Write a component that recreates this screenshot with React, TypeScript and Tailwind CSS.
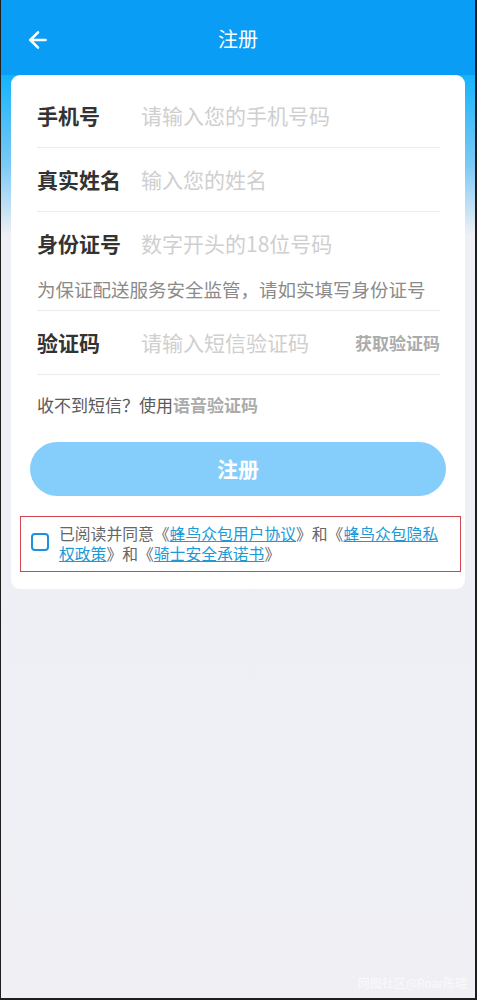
import { ArrowLeft } from 'lucide-react'

const font = "font-['Noto_Sans_CJK_SC','Noto_Sans',sans-serif]"

interface FieldRowProps {
  label: string
  placeholder: string
  action?: string
  bordered?: boolean
}

function FieldRow({ label, placeholder, action, bordered = true }: FieldRowProps) {
  return (
    <div className={`flex items-center h-[64px] ${bordered ? 'border-b border-[#ececec]' : ''}`}>
      <span className="w-[104px] shrink-0 text-[21px] font-bold text-[#333]">{label}</span>
      <span className="flex-1 text-[21px] text-[#cfcfcf]">{placeholder}</span>
      {action && <span className="text-[17px] font-bold text-[#ababab]">{action}</span>}
    </div>
  )
}

export default function App() {
  return (
    <div className={`${font} w-[477px] h-[1000px] flex flex-col bg-[#efeff4] border-l border-r-2 border-b-2 border-[#1e1e1e] relative`}>
      {/* header */}
      <header className="h-[75px] shrink-0 bg-[#0a9df6] flex items-center relative">
        <ArrowLeft className="absolute left-[24px] top-[27px] w-[26px] h-[26px] text-white" strokeWidth={2.4} />
        <h1 className="w-full text-center text-white text-[20px] leading-none pt-[3px]">注册</h1>
      </header>

      <div className="flex-1 bg-[linear-gradient(to_bottom,#14b3fb_0px,#7ccaf5_90px,#eef0f5_160px,#efeff4_100%)] pl-[10px] pr-[10px]">
        <div className="bg-white rounded-[9px] pt-[9px] pb-[17px]">
          <div className="pl-[26px] pr-[25px]">
            <FieldRow label="手机号" placeholder="请输入您的手机号码" />
            <FieldRow label="真实姓名" placeholder="输入您的姓名" />
            <FieldRow label="身份证号" placeholder="数字开头的18位号码" bordered={false} />
            <div className="h-[35px] pt-[2px] border-b border-[#ececec] text-[18.5px] leading-[22px] text-[#8a8a8a] whitespace-nowrap">
              为保证配送服务安全监管，请如实填写身份证号
            </div>
            <FieldRow label="验证码" placeholder="请输入短信验证码" action="获取验证码" />
            <p className="mt-[18px] text-[17px] leading-[24px] text-[#5a5a5a]">
              收不到短信？使用<span className="font-bold text-[#ababab]">语音验证码</span>
            </p>
          </div>

          <button className="mt-[25px] mx-[19px] w-[416px] h-[54px] rounded-full bg-[#85cefb] text-white text-[21px] font-bold">
            注册
          </button>

          <div className="mt-[20px] ml-[9px] mr-[4px] border border-[#d2434b] flex items-center pl-[10px] py-[7px]">
            <span className="w-[18px] h-[18px] shrink-0 rounded-[4px] border-[2.5px] border-[#1f8fe0] mb-[5px]" />
            <p className="ml-[10px] w-[392px] text-[15.8px] leading-[20px] text-[#666]">
              已阅读并同意《<span className="text-[#1b9ad6] underline">蜂鸟众包用户协议</span>》和《
              <span className="text-[#1b9ad6] underline">蜂鸟众包隐私权政策</span>》和《
              <span className="text-[#1b9ad6] underline">骑士安全承诺书</span>》
            </p>
          </div>
        </div>
      </div>

      <span className="absolute right-[8px] bottom-[6px] text-[12px] text-white/70">网图社区@Roar陈晓</span>
    </div>
  )
}
